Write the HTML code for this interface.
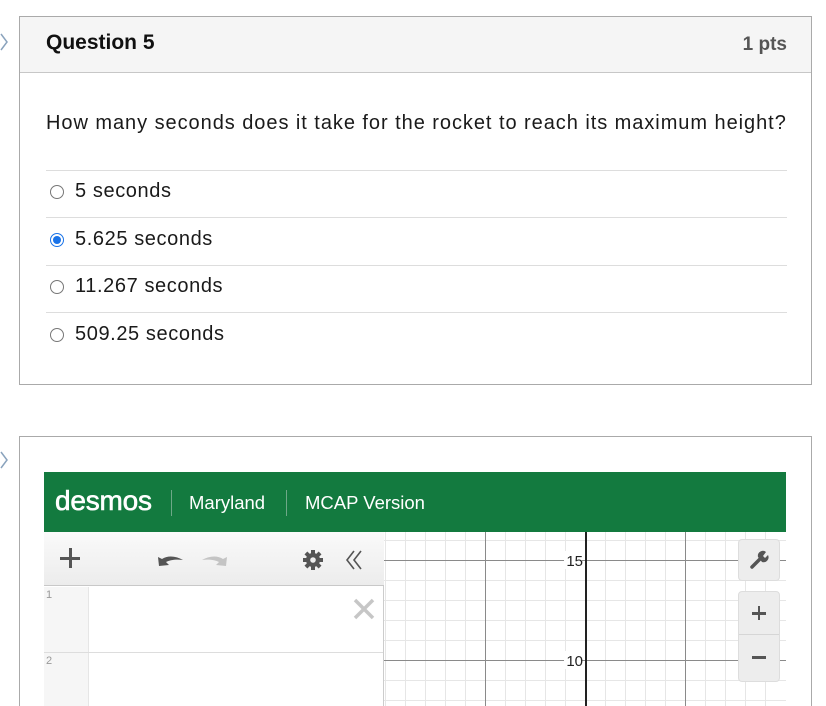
<!DOCTYPE html>
<html><head><meta charset="utf-8"><style>
*{margin:0;padding:0;box-sizing:border-box}
html,body{width:826px;height:706px;overflow:hidden}
body{background:#fff;font-family:"Liberation Sans",sans-serif;position:relative;color:#111}
.abs{position:absolute}
.card{position:absolute;border:1px solid #aaa;background:#fff}
.hdr{position:absolute;left:0;top:0;right:0;height:56px;background:#f5f5f5;border-bottom:1px solid #c7c7c7}
.sep{position:absolute;left:26px;width:741px;height:1px;background:#ddd}
.opt{position:absolute;left:55px;font-size:20px;letter-spacing:0.6px;color:#1a1a1a}
.rad{position:absolute;left:-5px;top:5px;width:14px;height:14px;border:1px solid #777;border-radius:50%;background:#fff}
</style></head><body>
<svg class="abs" style="left:0;top:33px" width="10" height="18"><path d="M1 1 L7 9 L1 17" fill="none" stroke="#8aa3bd" stroke-width="1.5"/></svg>
<svg class="abs" style="left:0;top:451px" width="10" height="18"><path d="M1 1 L7 9 L1 17" fill="none" stroke="#8aa3bd" stroke-width="1.5"/></svg>

<div class="card" style="left:19px;top:16px;width:793px;height:369px">
 <div class="hdr">
  <div class="abs" style="left:26px;top:14px;font-size:21px;font-weight:bold;color:#111">Question 5</div>
  <div class="abs" style="right:24px;top:17px;font-size:19px;font-weight:bold;color:#555">1 pts</div>
 </div>
 <div class="abs" style="left:26px;top:95px;font-size:20px;letter-spacing:0.95px;color:#1a1a1a;white-space:nowrap">How many seconds does it take for the rocket to reach its maximum height?</div>
 <div class="sep" style="top:153px"></div>
 <div class="sep" style="top:200px"></div>
 <div class="sep" style="top:248px"></div>
 <div class="sep" style="top:295px"></div>
</div>
<div class="opt" style="top:180px;left:75px"><span class="rad" style="left:-25px"></span>5 seconds</div>
<div class="opt" style="top:228px;left:75px"><span class="rad" style="left:-25px;border-color:#1a73e8"><span class="abs" style="left:2px;top:2px;width:8px;height:8px;border-radius:50%;background:#1a73e8"></span></span>5.625 seconds</div>
<div class="opt" style="top:275px;left:75px"><span class="rad" style="left:-25px"></span>11.267 seconds</div>
<div class="opt" style="top:323px;left:75px"><span class="rad" style="left:-25px"></span>509.25 seconds</div>

<div class="card" style="left:19px;top:436px;width:793px;height:271px"></div>
<div class="abs" style="left:44px;top:472px;width:742px;height:60px;background:#137a3f;color:#fff">
 <div class="abs" style="left:11px;top:13px;font-size:28px;letter-spacing:-0.2px;-webkit-text-stroke:0.6px #fff">desmos</div>
 <div class="abs" style="left:127px;top:18px;width:1px;height:26px;background:#6ea888"></div>
 <div class="abs" style="left:145px;top:20px;font-size:18.5px">Maryland</div>
 <div class="abs" style="left:242px;top:18px;width:1px;height:26px;background:#6ea888"></div>
 <div class="abs" style="left:261px;top:20px;font-size:18.5px">MCAP Version</div>
</div>

<svg class="abs" style="left:384px;top:532px" width="402" height="174">
<g stroke="#e6e6e6" stroke-width="1">
<path d="M21.5 0V174M41.5 0V174M61.5 0V174M81.5 0V174M121.5 0V174M141.5 0V174M161.5 0V174M181.5 0V174M221.5 0V174M241.5 0V174M261.5 0V174M281.5 0V174M321.5 0V174M341.5 0V174M361.5 0V174M381.5 0V174M1.5 0V174"/>
<path d="M0 8.5H402M0 48.5H402M0 68.5H402M0 88.5H402M0 108.5H402M0 148.5H402M0 168.5H402"/>
</g>
<g stroke="#8a8a8a" stroke-width="1"><path d="M101.5 0V174M301.5 0V174M0 28.5H402M0 128.5H402"/></g>
<path d="M202 0V174" stroke="#222" stroke-width="2"/>
<rect x="180" y="19" width="18" height="18" fill="#fff"/>
<rect x="180" y="119" width="18" height="18" fill="#fff"/>
<text x="199" y="34" font-size="15" text-anchor="end" fill="#222" font-family="Liberation Sans">15</text>
<text x="199" y="134" font-size="15" text-anchor="end" fill="#222" font-family="Liberation Sans">10</text>
</svg>

<div class="abs" style="left:738px;top:539px;width:42px;height:42px;background:#ededed;border:1px solid #ddd;border-radius:4px"></div>
<svg class="abs" style="left:747px;top:548px" width="24" height="24"><path d="M5 19 L13 11" stroke="#555" stroke-width="3.5" stroke-linecap="round"/><path d="M11 9 A5 5 0 0 1 19 4 L16 8 L18 10 L21 7 A5 5 0 0 1 15 14 Z" fill="#555"/></svg>
<div class="abs" style="left:738px;top:591px;width:42px;height:91px;background:#ededed;border:1px solid #ddd;border-radius:4px"></div>
<div class="abs" style="left:739px;top:634px;width:40px;height:1px;background:#d6d6d6"></div>
<div class="abs" style="left:752px;top:612px;width:14px;height:2.5px;background:#555"></div>
<div class="abs" style="left:757.8px;top:606px;width:2.5px;height:14px;background:#555"></div>
<div class="abs" style="left:752px;top:656px;width:14px;height:3px;background:#555"></div>

<div class="abs" style="left:44px;top:532px;width:340px;height:174px;background:#fff;border-right:1px solid #ccc"></div>
<div class="abs" style="left:44px;top:532px;width:340px;height:54px;background:linear-gradient(#fafafa,#ececec);border-bottom:1px solid #c8c8c8"></div>
<div class="abs" style="left:60px;top:557px;width:20px;height:3px;background:#555"></div>
<div class="abs" style="left:68.5px;top:548px;width:3px;height:20px;background:#555"></div>
<svg class="abs" style="left:155px;top:550px" width="75" height="20">
<path d="M4 16 L3 7 L7 9 C13 5 21 6 28 10 C21 9 15 10 11 12 L14 15 Z" fill="#555"/>
<path d="M71 16 L72 7 L68 9 C62 5 54 6 47 10 C54 9 60 10 64 12 L61 15 Z" fill="#c4c4c4"/>
</svg>
<svg class="abs" style="left:302px;top:549px" width="22" height="22" viewBox="0 0 22 22"><g fill="#555"><circle cx="11" cy="11" r="7"/><rect x="9" y="1" width="4" height="20"/><rect x="1" y="9" width="20" height="4"/><rect x="9" y="1" width="4" height="20" transform="rotate(45 11 11)"/><rect x="9" y="1" width="4" height="20" transform="rotate(-45 11 11)"/></g><circle cx="11" cy="11" r="2.8" fill="#eee"/></svg>
<svg class="abs" style="left:344px;top:549px" width="24" height="22"><path d="M10 2 L3 11 L10 20 M17 2 L10 11 L17 20" fill="none" stroke="#555" stroke-width="1.6"/></svg>
<div class="abs" style="left:44px;top:587px;width:45px;height:119px;background:#f6f6f6;border-right:1px solid #e6e6e6"></div>
<div class="abs" style="left:46px;top:589px;font-size:11px;color:#999">1</div>
<div class="abs" style="left:46px;top:655px;font-size:11px;color:#999">2</div>
<div class="abs" style="left:44px;top:652px;width:339px;height:1px;background:#ddd"></div>
<svg class="abs" style="left:352px;top:597px" width="24" height="24"><path d="M3 3 L21 21 M21 3 L3 21" stroke="#c6c6c6" stroke-width="3.5"/></svg>
</body></html>
